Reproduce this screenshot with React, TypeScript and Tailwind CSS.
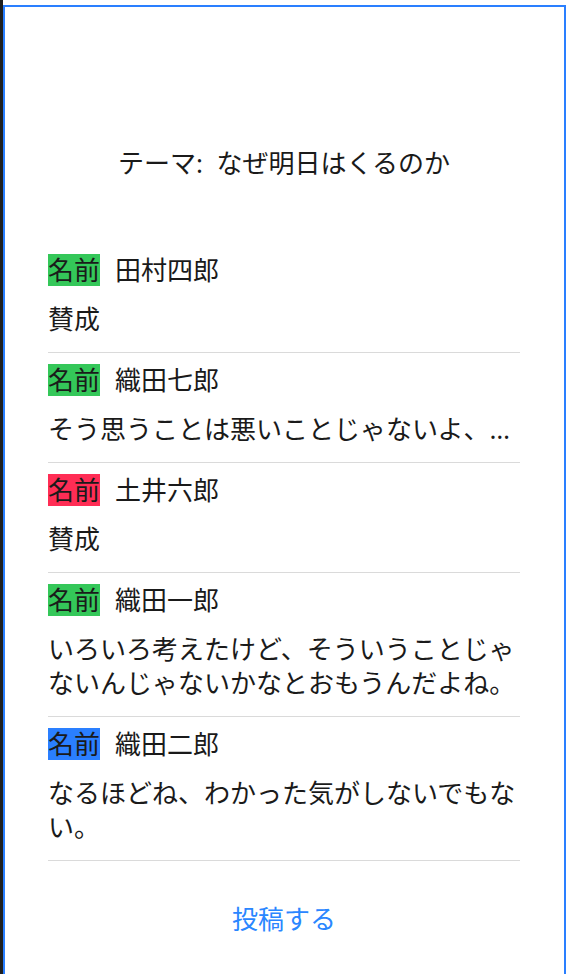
const posts = [
  { name: "田村四郎", color: "bg-[#34c759]", text: "賛成", oneLine: false },
  {
    name: "織田七郎",
    color: "bg-[#34c759]",
    text: "そう思うことは悪いことじゃないよ、きっと明日はくるからね。",
    oneLine: true,
  },
  { name: "土井六郎", color: "bg-[#ff2d55]", text: "賛成", oneLine: false },
  {
    name: "織田一郎",
    color: "bg-[#34c759]",
    text: "いろいろ考えたけど、そういうことじゃないんじゃないかなとおもうんだよね。",
    oneLine: false,
  },
  {
    name: "織田二郎",
    color: "bg-[#2a7fff]",
    text: "なるほどね、わかった気がしないでもない。",
    oneLine: false,
  },
];

function PostRow({ post }: { post: (typeof posts)[number] }) {
  return (
    <li className="pt-[10px] pb-[16px] border-b border-[#dadada]">
      <div className="flex items-center h-[34px]">
        <span className={`inline-block h-[32px] leading-[32px] ${post.color}`}>名前</span>
        <span className="ml-[15px]">{post.name}</span>
      </div>
      <p className={`mt-[15px] leading-[34px] ${post.oneLine ? "truncate" : ""}`}>{post.text}</p>
    </li>
  );
}

export default function App() {
  return (
    <div
      lang="ja"
      className="flex h-[974px] overflow-hidden bg-white text-[26px] text-[#1a1a1a]"
      style={{ fontFamily: '"Noto Sans", "Noto Sans CJK JP", sans-serif' }}
    >
      <div className="w-[3px] shrink-0 bg-[#1f1f1f]" />
      <div className="flex-1 min-w-0 pt-[5px]">
        <div className="h-[1000px] border-2 border-b-0 border-[#2a7fff] pl-[43px] pr-[44px]">
          <header className="h-[236px] pt-[139px]">
            <h1 className="text-center leading-[34px]">テーマ:&nbsp; なぜ明日はくるのか</h1>
          </header>
          <ul>
            {posts.map((p) => (
              <PostRow key={p.name} post={p} />
            ))}
          </ul>
          <div className="mt-[41px] text-center leading-[34px]">
            <button className="text-[#2a86ff]">投稿する</button>
          </div>
        </div>
      </div>
    </div>
  );
}
